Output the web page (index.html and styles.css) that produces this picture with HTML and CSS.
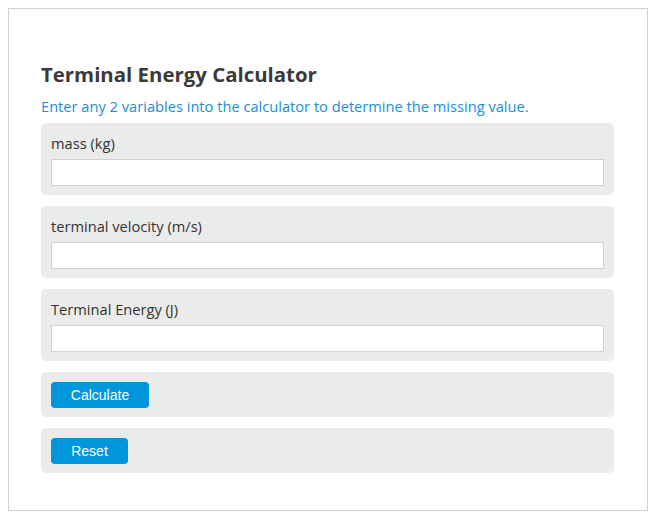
FILE: index.html
```html
<!DOCTYPE html>
<html>
<head>
<meta charset="utf-8">
<link rel="stylesheet" href="styles.css">
</head>
<body>
<div class="calc">
  <h1 class="title">Terminal Energy Calculator</h1>
  <p class="intro">Enter any 2 variables into the calculator to determine the missing value.</p>
  <div class="panel">
    <label class="label">mass (kg)</label>
    <input class="field" type="text">
  </div>
  <div class="panel">
    <label class="label">terminal velocity (m/s)</label>
    <input class="field" type="text">
  </div>
  <div class="panel">
    <label class="label">Terminal Energy (J)</label>
    <input class="field" type="text">
  </div>
  <div class="panel">
    <button class="btn btn-calc">Calculate</button>
  </div>
  <div class="panel">
    <button class="btn btn-reset">Reset</button>
  </div>
</div>
</body>
</html>
```
FILE: styles.css
```css
html, body {
  margin: 0;
  padding: 0;
  background: #fff;
}
body {
  padding: 8px;
  font-family: "Open Sans", "DejaVu Sans", sans-serif;
  color: #333;
}
.calc {
  width: 573px;
  height: 443px;
  border: 1px solid #cfcfcf;
  padding: 50px 33px 8px 32px;
}
.title {
  margin: 0;
  font-size: 20.4px;
  font-weight: 700;
  line-height: 30px;
  color: #3a3a3a;
}
.intro {
  margin: 7px 0 7px;
  font-size: 14.65px;
  line-height: 20px;
  color: #1a8fd8;
}
.panel {
  background: #eaebeb;
  border-radius: 5px;
  padding: 10px 10px 9px;
  margin-bottom: 11px;
  display: flex;
  flex-direction: column;
  align-items: flex-start;
}
.label {
  font-size: 14.65px;
  line-height: 20px;
  margin-bottom: 6px;
  color: #333;
}
.field {
  box-sizing: border-box;
  width: 100%;
  height: 27px;
  margin: 0;
  border: 1px solid #d2d2d2;
  background: #fff;
}
.btn {
  box-sizing: border-box;
  height: 26px;
  border: none;
  border-radius: 4px;
  background: #0096dd;
  color: #fff;
  font-family: "Liberation Sans", Arial, sans-serif;
  font-size: 14px;
  padding: 0;
}
.btn-calc { width: 98px; }
.btn-reset { width: 77px; }
```
